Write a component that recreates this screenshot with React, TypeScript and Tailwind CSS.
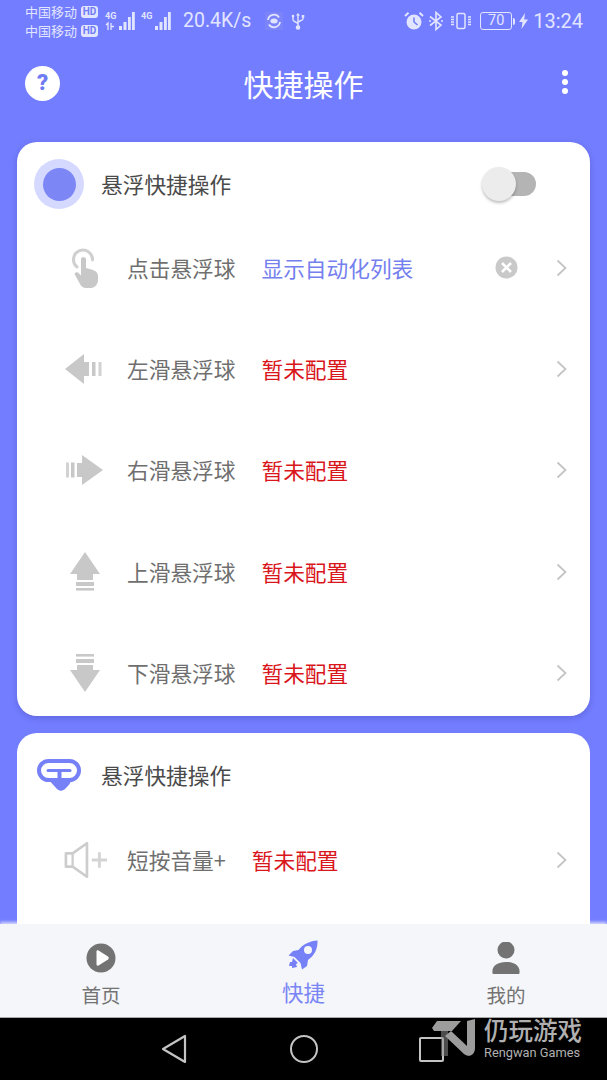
import React from "react";

const CJK = "font-['Noto_Sans_CJK_SC',sans-serif]";
const S = "#e2e5ff";

function Signal({ small }: { small?: boolean }) {
  return (
    <svg width="30" height="22" viewBox="0 0 30 22" className="shrink-0">
      <text x="0" y="9" fontSize="9" fontWeight="700" fill={S} fontFamily="Roboto, sans-serif">4G</text>
      {small && <path d="M1 15l2-2v7M6 13v7M6 16.500h3" fill="none" stroke={S} strokeWidth="1.300" />}
      <rect x="14" y="16" width="3" height="4" fill={S} />
      <rect x="18.500" y="12" width="3" height="8" fill={S} />
      <rect x="23" y="7" width="2.800" height="13" fill={S} />
      <rect x="27" y="2" width="2.800" height="18" fill={S} />
    </svg>
  );
}

function HD() {
  return (
    <span className="inline-flex h-[12px] w-[17px] items-center justify-center rounded-[3px] bg-[#e2e5ff] font-['Roboto',sans-serif] text-[10px] leading-none font-bold text-[#6f7af5]">
      HD
    </span>
  );
}

function StatusBar() {
  return (
    <div className={`flex h-[42px] shrink-0 items-center pl-[25px] pr-[24px] text-[#e2e5ff] ${CJK}`}>
      <div className="flex flex-col gap-[3px] text-[13px] leading-[16px]">
        <div className="flex items-center gap-[2px]"><span className="w-[54px] whitespace-nowrap">中国移动</span><HD /></div>
        <div className="flex items-center gap-[2px]"><span className="w-[54px] whitespace-nowrap">中国移动</span><HD /></div>
      </div>
      <div className="ml-[7px] flex items-center gap-[6px]">
        <Signal small />
        <Signal />
      </div>
      <span className="ml-[12px] font-['Roboto',sans-serif] text-[19.500px] leading-none whitespace-nowrap">20.4K/s</span>
      <svg width="18" height="18" viewBox="0 0 18 18" className="ml-[14px]">
        <rect x="0" y="0" width="18" height="18" fill="#8b93f2" opacity=".35" />
        <path d="M3 8a6 6 0 0 1 11-2.500M15 10a6 6 0 0 1-11 2.500" fill="none" stroke={S} strokeWidth="1.800" />
        <ellipse cx="9" cy="9" rx="3.600" ry="2.500" fill={S} />
      </svg>
      <svg width="14" height="18" viewBox="0 0 14 18" className="ml-[8px]" fill="none" stroke={S} strokeWidth="1.400">
        <path d="M7 2v15M2 5v3c0 1.500 5 2.500 5 4M12 5v2c0 1.500-5 2-5 3.500" />
        <circle cx="7" cy="15.500" r="1.600" fill={S} />
        <rect x="10.700" y="3" width="2.600" height="2.600" fill={S} stroke="none" />
        <circle cx="2" cy="4" r="1.300" fill={S} stroke="none" />
        <path d="M5 3.500 7 1l2 2.500z" fill={S} stroke="none" />
      </svg>
      <div className="ml-auto flex items-center">
        <svg width="20" height="20" viewBox="0 0 20 20">
          <circle cx="10" cy="11" r="7.500" fill={S} />
          <path d="M10 6.500V11l3.500 3" fill="none" stroke="#6f7af5" strokeWidth="1.500" />
          <path d="M1 5 4.500 1.800M19 5 15.500 1.800" stroke={S} strokeWidth="2" />
        </svg>
        <svg width="16" height="20" viewBox="0 0 16 20" className="ml-[4px]" fill="none" stroke={S} strokeWidth="1.600">
          <path d="M2 5.500 13 14l-5 4.500V1.500L13 6 2 14.500" />
          <circle cx="2" cy="10" r="1" fill={S} stroke="none" />
          <circle cx="14" cy="10" r="1" fill={S} stroke="none" />
        </svg>
        <svg width="24" height="20" viewBox="0 0 24 20" className="ml-[5px]" fill="none" stroke={S} strokeWidth="1.500">
          <rect x="8" y="2.500" width="8" height="15" rx="1.500" />
          <path d="M2 6h3M2 8.500h3M2 11h3M2 13.500h3M19 6h3M19 8.500h3M19 11h3M19 13.500h3" strokeWidth="1.300" />
        </svg>
        <div className="ml-[7px] flex items-center">
          <span className="flex h-[18px] w-[32px] items-center justify-center rounded-[3px] border border-[#e2e5ff] font-['Roboto',sans-serif] text-[14.500px] leading-none">70</span>
          <span className="ml-[1px] h-[7px] w-[2px] rounded-r-sm bg-[#e2e5ff]" />
        </div>
        <svg width="9" height="16" viewBox="0 0 9 16" className="ml-[4px]">
          <path d="M6 0 0 9h3.500L2.500 16 9 6.500H5.200z" fill={S} />
        </svg>
        <span className="ml-[5px] font-['Roboto',sans-serif] text-[20px] leading-none">13:24</span>
      </div>
    </div>
  );
}

function Header() {
  return (
    <div className="flex h-[80px] shrink-0 items-center justify-between px-[25px]">
      <div className="mt-[2px] flex h-[35px] w-[35px] items-center justify-center rounded-full bg-white font-['Roboto',sans-serif] text-[22px] leading-none font-black text-[#6f7af5]">?</div>
      <h1 className={`mt-[1px] text-[30px] leading-none font-normal text-white ${CJK}`}>快捷操作</h1>
      <div className="flex w-[35px] flex-col items-center gap-[3px]">
        <span className="h-[6px] w-[6px] rounded-full bg-white" />
        <span className="h-[6px] w-[6px] rounded-full bg-white" />
        <span className="h-[6px] w-[6px] rounded-full bg-white" />
      </div>
    </div>
  );
}

const G = "#c8c8c8";

function HandIcon() {
  return (
    <svg width="32" height="42" viewBox="0 0 32 42">
      <path d="M8 20A9.500 9.500 0 1 1 23.500 13" fill="none" stroke="#d0d0d0" strokeWidth="3" strokeLinecap="round" />
      <path d="M12 12c0-2.200 5-2.200 5 0v9l7 2c3 1 5 3 5 6v4c0 4-3 8-7 8h-5c-3 0-5-2-6-4l-5-9c-1-2 1-3.500 3-2.500l3 3z" fill={G} />
    </svg>
  );
}
function LeftIcon() {
  return (
    <svg width="40" height="32" viewBox="0 0 40 32">
      <path d="M0 16 19 1v8h5v14h-5v8z" fill={G} />
      <rect x="27" y="9" width="3.500" height="14" fill={G} />
      <rect x="33.500" y="9" width="3" height="14" fill="#d2d2d2" />
    </svg>
  );
}
function RightIcon() {
  return (
    <svg width="40" height="32" viewBox="0 0 40 32">
      <rect x="1" y="8.500" width="3" height="15" fill="#d2d2d2" />
      <rect x="6" y="8.500" width="3.500" height="15" fill={G} />
      <path d="M38 16 17 1v8h-5v14h5v8z" fill={G} />
    </svg>
  );
}
function UpIcon() {
  return (
    <svg width="32" height="40" viewBox="0 0 32 40">
      <path d="M16 0 31 22H24v6H8v-6H1z" fill={G} />
      <rect x="7" y="30" width="18" height="4" fill={G} />
      <rect x="7" y="36" width="18" height="2.600" fill={G} />
    </svg>
  );
}
function DownIcon() {
  return (
    <svg width="32" height="40" viewBox="0 0 32 40">
      <rect x="7" y="1" width="18" height="2.600" fill={G} />
      <rect x="7" y="6" width="18" height="4" fill={G} />
      <path d="M16 39 31 17H24v-5H8v5H1z" fill={G} />
    </svg>
  );
}
function VolumeIcon() {
  return (
    <svg width="46" height="40" viewBox="0 0 46 40" className="ml-[2px]">
      <path d="M2 13h7L24 2.500v35L9 27H2z" fill="none" stroke="#cdcdcd" strokeWidth="2.800" strokeLinejoin="round" />
      <path d="M9 13v14" stroke="#cdcdcd" strokeWidth="2.400" />
      <path d="M29 20h16M37 12v16" stroke="#d4d4d4" strokeWidth="3" />
    </svg>
  );
}

function Chevron() {
  return (
    <svg width="11" height="18" viewBox="0 0 11 18" className="block shrink-0">
      <path d="M1.500 1.500 9.500 9l-8 7.500" fill="none" stroke="#c4c4c4" strokeWidth="1.800" />
    </svg>
  );
}

function Row({ icon, label, value, blue, clear }: { icon: React.ReactNode; label: string; value: string; blue?: boolean; clear?: boolean }) {
  return (
    <div className={`flex h-[101.300px] items-center pl-[45px] pr-[23px] ${CJK}`}>
      <div className="flex w-[46px] shrink-0 justify-center">{icon}</div>
      <span className="ml-[19px] text-[21.700px] leading-none whitespace-nowrap text-[#6f6f6f]">{label}</span>
      <span className={`ml-[26px] text-[21.700px] leading-none whitespace-nowrap ${blue ? "text-[#7480ee]" : "text-[#d9161c]"}`}>{value}</span>
      {clear && (
        <svg width="23" height="23" viewBox="0 0 23 23" className="ml-auto mr-[38px] shrink-0">
          <circle cx="11.500" cy="11.500" r="11" fill="#c9c9c9" />
          <path d="M7 7l9 9M16 7l-9 9" stroke="#fff" strokeWidth="2.600" />
        </svg>
      )}
      <span className={clear ? "" : "ml-auto"}><Chevron /></span>
    </div>
  );
}

function NavItem({ icon, label, active }: { icon: React.ReactNode; label: string; active?: boolean }) {
  return (
    <div className={`flex flex-col items-center ${CJK}`}>
      <div className={`flex h-[34px] items-center justify-center ${active ? "pb-[6px]" : ""}`}>{icon}</div>
      <span className={`leading-none ${active ? "mt-[6px] text-[21.500px] text-[#7a85f5]" : "mt-[10px] text-[19.500px] text-[#737373]"}`}>{label}</span>
    </div>
  );
}

export default function App() {
  return (
    <div className="flex h-[1080px] w-[607px] flex-col overflow-hidden bg-[#737dff]">
      <StatusBar />
      <Header />
      <main className="flex min-h-0 flex-1 flex-col gap-[17px] overflow-hidden px-[17px] pt-[20px]">
        <section className="h-[574px] shrink-0 rounded-[20px] bg-white shadow-[0_2px_6px_rgba(40,40,120,0.25)]">
          <div className={`relative flex h-[84px] items-center pl-[17px] pr-[54px] ${CJK}`}>
            <div className="flex h-[50px] w-[50px] items-center justify-center rounded-full bg-[#d5d9ff]">
              <div className="h-[33px] w-[33px] rounded-full bg-[#7c86f5]" />
            </div>
            <span className="ml-[17px] text-[21.700px] leading-none text-[#4a4a4a]">悬浮快捷操作</span>
            <div className="relative ml-auto flex h-[24px] w-[54px] items-center justify-end rounded-full">
              <div className="h-[24px] w-[36px] rounded-full bg-[#b4b4b4]" />
              <div className="absolute top-[-5px] left-0 h-[34px] w-[34px] rounded-full bg-[#ececec] shadow-[0_2px_3px_rgba(0,0,0,0.25)]" />
            </div>
          </div>
          <div className="-mt-[9px]">
            <Row icon={<HandIcon />} label="点击悬浮球" value="显示自动化列表" blue clear />
            <Row icon={<LeftIcon />} label="左滑悬浮球" value="暂未配置" />
            <Row icon={<RightIcon />} label="右滑悬浮球" value="暂未配置" />
            <Row icon={<UpIcon />} label="上滑悬浮球" value="暂未配置" />
            <Row icon={<DownIcon />} label="下滑悬浮球" value="暂未配置" />
          </div>
        </section>
        <section className="flex-1 rounded-t-[20px] bg-white">
          <div className={`flex h-[84px] items-center pl-[20px] ${CJK}`}>
            <svg width="44" height="33" viewBox="0 0 44 33">
              <rect x="2" y="2" width="40" height="19" rx="9.500" fill="none" stroke="#7681f8" strokeWidth="4" />
              <path d="M11 11.500h22" stroke="#7681f8" strokeWidth="3" strokeLinecap="round" />
              <rect x="20.500" y="11" width="4" height="10" fill="#7681f8" />
              <path d="M10 19H35C34 24 31 27 29 29C26 32.500 23 32.500 20 30Z" fill="#7681f8" />
            </svg>
            <span className="ml-[20px] text-[21.700px] leading-none text-[#4a4a4a]">悬浮快捷操作</span>
          </div>
          <div className="-mt-[8px]">
            <Row icon={<VolumeIcon />} label="短按音量+" value="暂未配置" />
          </div>
        </section>
      </main>
      <nav className="flex h-[93px] shrink-0 justify-around bg-[#f5f6f9] pt-[17px] shadow-[0_-2px_3px_rgba(255,255,255,0.7)]">
        <div className="flex w-[202px] justify-center">
          <NavItem label="首页" icon={
            <svg width="30" height="30" viewBox="0 0 30 30">
              <circle cx="15" cy="15" r="14.500" fill="#737373" />
              <path d="M10.500 8.500c0-1 1-1.500 2-1L22 13.500c1 .7 1 2.300 0 3L12.500 22.500c-1 .5-2 0-2-1z" fill="#fff" />
            </svg>} />
        </div>
        <div className="flex w-[203px] justify-center">
          <NavItem active label="快捷" icon={
            <svg width="30" height="30" viewBox="0 0 30 30">
              <path d="M29.500.5C30 9 26 16 20 20L19 26 14 29.500 12.500 23 6.500 17 .5 15.500 5 11 10.500 10C15 4 22 1 29.500.5z" fill="#7681f8" />
              <circle cx="20" cy="10" r="4" fill="#f5f6f9" />
              <path d="M5 18 10 23 8 24 9 27 4 28 4 26 1 26 2 22 4 22z" fill="#7681f8" />
            </svg>} />
        </div>
        <div className="flex w-[202px] justify-center">
          <NavItem label="我的" icon={
            <svg width="28" height="32" viewBox="0 0 28 32">
              <circle cx="14" cy="8" r="8.500" fill="#737373" />
              <path d="M.5 31C-.5 24 5.500 20 14 20S28.500 24 27.500 31C27.500 31.700 27 32 26.500 32H1.500C1 32 .5 31.700 .5 31z" fill="#737373" />
            </svg>} />
        </div>
      </nav>
      <div className="relative flex h-[63px] shrink-0 items-center border-t border-[#a8a8a8] bg-black">
        <svg width="26" height="30" viewBox="0 0 26 30" className="ml-[161px]">
          <path d="M2 15 24 2v26z" fill="none" stroke="#c4c4c4" strokeWidth="2.200" strokeLinejoin="round" />
        </svg>
        <div className="ml-[103px] h-[28px] w-[28px] rounded-full border-[2.200px] border-[#c4c4c4]" />
        <div className="ml-[101px] h-[25px] w-[25px] rounded-[2px] border-[2.200px] border-[#c4c4c4]" />
        <div className="absolute top-0 left-[431px] flex items-start text-[#b0b0b0]">
          <svg width="46" height="40" viewBox="0 0 46 40">
            <path d="M1 10 6 3H30L21 13H3z" fill="#9c9c9c" />
            <path d="M10 13h7v25h-7z" fill="#8a8a8a" opacity=".55" />
            <path d="M14 18 20 13 36 28V3L44 1V30C44 37 38 40 33 36z" fill="#9c9c9c" />
          </svg>
          <div className="ml-[7px] flex flex-col">
            <span className={`block text-[24.500px] leading-[24px] font-medium whitespace-nowrap ${CJK}`}>仍玩游戏</span>
            <span className="mt-[4px] block font-['Roboto',sans-serif] text-[12.800px] leading-[14px] whitespace-nowrap">Rengwan Games</span>
          </div>
        </div>
      </div>
    </div>
  );
}
